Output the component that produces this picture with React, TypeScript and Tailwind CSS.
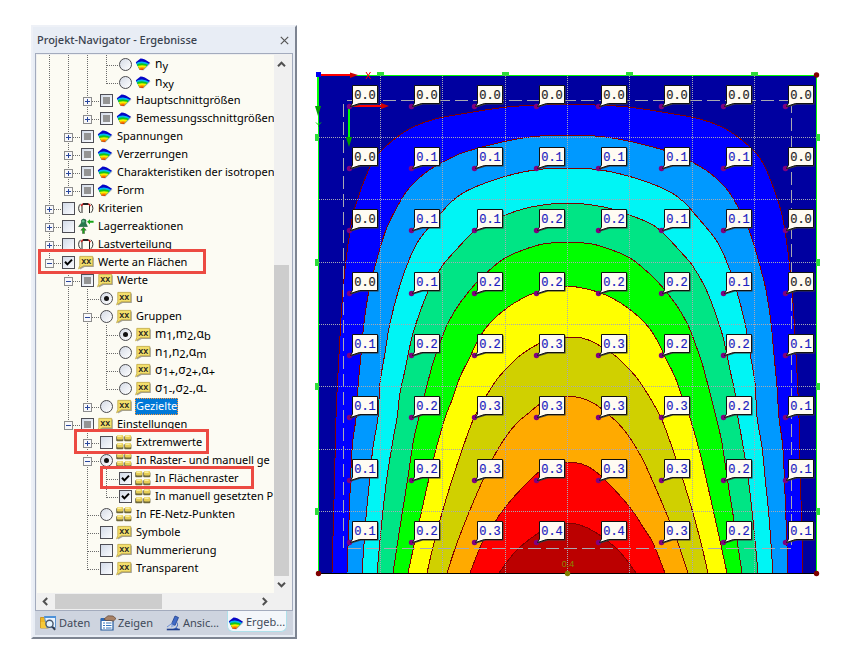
import React from "react";

type Control = "radio" | "radio-on" | "check" | "check-on" | "mixed";
type IconName = "fan" | "frame" | "support" | "tag" | "blocks";

interface Item {
  level: number;
  control: Control;
  icon: IconName;
  text: string;
  label?: React.ReactNode;
  expander?: "+" | "-";
  selected?: boolean;
  mark?: string;
}

const Sub = ({ children }: { children: React.ReactNode }) => (
  <span className="relative top-[2px] text-[11px]">{children}</span>
);

const items: Item[] = [
  { level: 3, control: "radio", icon: "fan", text: "ny", label: <>n<Sub>y</Sub></> },
  { level: 3, control: "radio", icon: "fan", text: "nxy", label: <>n<Sub>xy</Sub></> },
  { level: 2, control: "mixed", icon: "fan", text: "Hauptschnittgrößen", expander: "+" },
  { level: 2, control: "mixed", icon: "fan", text: "Bemessungsschnittgrößen", expander: "+" },
  { level: 1, control: "mixed", icon: "fan", text: "Spannungen", expander: "+" },
  { level: 1, control: "mixed", icon: "fan", text: "Verzerrungen", expander: "+" },
  { level: 1, control: "mixed", icon: "fan", text: "Charakteristiken der isotropen", expander: "+" },
  { level: 1, control: "mixed", icon: "fan", text: "Form", expander: "+" },
  { level: 0, control: "check", icon: "frame", text: "Kriterien", expander: "+" },
  { level: 0, control: "check", icon: "support", text: "Lagerreaktionen", expander: "+" },
  { level: 0, control: "check", icon: "frame", text: "Lastverteilung", expander: "+" },
  { level: 0, control: "check-on", icon: "tag", text: "Werte an Flächen", expander: "-", mark: "left-[1px] -top-1 h-[25px] w-[168px]" },
  { level: 1, control: "mixed", icon: "tag", text: "Werte", expander: "-" },
  { level: 2, control: "radio-on", icon: "tag", text: "u" },
  { level: 2, control: "radio", icon: "tag", text: "Gruppen", expander: "-" },
  { level: 3, control: "radio-on", icon: "tag", text: "m1,m2,αb", label: <>m<Sub>1</Sub>,m<Sub>2</Sub>,α<Sub>b</Sub></> },
  { level: 3, control: "radio", icon: "tag", text: "n1,n2,αm", label: <>n<Sub>1</Sub>,n<Sub>2</Sub>,α<Sub>m</Sub></> },
  { level: 3, control: "radio", icon: "tag", text: "σ1+,σ2+,α+", label: <>σ<Sub>1+</Sub>,σ<Sub>2+</Sub>,α<Sub>+</Sub></> },
  { level: 3, control: "radio", icon: "tag", text: "σ1-,σ2-,α-", label: <>σ<Sub>1-</Sub>,σ<Sub>2-</Sub>,α<Sub>-</Sub></> },
  { level: 2, control: "radio", icon: "tag", text: "Gezielte", expander: "+", selected: true },
  { level: 1, control: "mixed", icon: "tag", text: "Einstellungen", expander: "-" },
  { level: 2, control: "check", icon: "blocks", text: "Extremwerte", expander: "+", mark: "left-[37px] -top-1 h-[25px] w-[135px]" },
  { level: 2, control: "radio-on", icon: "blocks", text: "In Raster- und manuell ge", expander: "-" },
  { level: 3, control: "check-on", icon: "blocks", text: "In Flächenraster", mark: "left-[63px] -top-[3px] h-[23px] w-[154px]" },
  { level: 3, control: "check-on", icon: "blocks", text: "In manuell gesetzten P" },
  { level: 2, control: "radio", icon: "blocks", text: "In FE-Netz-Punkten" },
  { level: 2, control: "check", icon: "tag", text: "Symbole" },
  { level: 2, control: "check", icon: "tag", text: "Nummerierung" },
  { level: 2, control: "check", icon: "tag", text: "Transparent" },
];

/** True when a later row continues the branch line of the given level. */
function continues(index: number, level: number) {
  for (let i = index + 1; i < items.length; i++) {
    if (items[i].level < level) return false;
    if (items[i].level === level) return true;
  }
  return false;
}

function Guides({ index }: { index: number }) {
  const { level, expander } = items[index];
  const own = 9.5 + level * 19;
  const dots = { stroke: "#6b6b6b", strokeDasharray: "1 1" };
  return (
    <svg width={22 + level * 19} height={18} className="shrink-0" shapeRendering="crispEdges" aria-hidden="true">
      {Array.from({ length: level }, (_, l) =>
        continues(index, l) ? <line key={l} x1={9.5 + l * 19} x2={9.5 + l * 19} y1={0} y2={18} {...dots} /> : null
      )}
      <line x1={own} x2={own} y1={0} y2={continues(index, level) ? 18 : 11} {...dots} />
      <line x1={own} x2={own + 12} y1={10.5} y2={10.5} {...dots} />
      {expander && (
        <g>
          <rect x={own - 4} y={6.5} width={8} height={8} fill="#f8f8fa" stroke="#8d8d8d" />
          <path d={`M${own - 2.5} 10.5h5${expander === "+" ? `M${own} 8v5` : ""}`} stroke="#29479c" fill="none" />
        </g>
      )}
    </svg>
  );
}

function ControlBox({ kind, id }: { kind: Control; id: string }) {
  if (kind === "radio" || kind === "radio-on") {
    return (
      <span className="grid size-[13px] shrink-0 place-items-center">
        <input
          id={id}
          type="radio"
          name={id}
          defaultChecked={kind === "radio-on"}
          className="peer size-[13px] appearance-none rounded-full border border-[#4a4a4e] bg-linear-to-br from-[#d5dbe6] to-white [grid-area:1/1]"
        />
        <span className="pointer-events-none hidden size-[5px] rounded-full bg-[#111] [grid-area:1/1] peer-checked:block" />
      </span>
    );
  }
  return (
    <span className="grid size-[13px] shrink-0 place-items-center">
      <input
        id={id}
        type="checkbox"
        defaultChecked={kind === "check-on"}
        className="peer size-[13px] appearance-none border border-[#4e4e55] bg-linear-to-br from-[#d3dbe8] to-[#fbfcff] [grid-area:1/1]"
      />
      {kind === "mixed" && <span className="pointer-events-none size-[7px] bg-[#949494] [grid-area:1/1]" />}
      <svg viewBox="0 0 9 9" className="pointer-events-none hidden size-[9px] [grid-area:1/1] peer-checked:block" aria-hidden="true">
        <path d="M1 3.8 3.4 6.4 8 1.6" fill="none" stroke="#000" strokeWidth="2" />
      </svg>
    </span>
  );
}

function FanIcon() {
  return (
    <svg width="16" height="16" viewBox="0 0 16 16" className="shrink-0" aria-hidden="true">
      <defs>
        <clipPath id="fan">
          <path d="M.8 6.2 5.5 2.4Q9 2.2 15 6.8L7.8 13.8 4.4 13.2Z" />
        </clipPath>
      </defs>
      <path d="M1.4 7 6 3.2Q10 3 15.6 7.6L8.4 14.6 5 14Z" fill="#999" opacity=".5" />
      <g clipPath="url(#fan)">
        <rect width="16" height="16" fill="#0505c8" />
        <path d="M0 8Q7 2.6 16 9V16H0Z" fill="#00b8f0" />
        <path d="M0 9.6Q7 4.6 16 10.4V16H0Z" fill="#10c818" />
        <path d="M0 11.4Q7 7 16 12V16H0Z" fill="#f4f000" />
        <path d="M0 13Q7 9.2 16 13.6V16H0Z" fill="#ff8c00" />
        <path d="M0 14.3Q7 10.8 16 15V16H0Z" fill="#e01010" />
      </g>
    </svg>
  );
}

function ItemIcon({ name }: { name: IconName }) {
  if (name === "fan") return <FanIcon />;
  if (name === "tag")
    return (
      <svg width="16" height="16" viewBox="0 0 16 16" className="shrink-0" aria-hidden="true">
        <path d="M3 3.4H15.8V13H6.600L2 15.600Z" fill="#666" opacity=".6" />
        <path d="M1.800 2.400H14.700V11.800H5.400L.600 14.800 1.800 11.400Z" fill="#f3df6b" stroke="#bfa640" strokeWidth=".8" />
        <text x="8.3" y="9.6" textAnchor="middle" fontSize="9" fontWeight="600" fontFamily="'Open Sans', sans-serif" fill="#222">xx</text>
      </svg>
    );
  if (name === "blocks")
    return (
      <svg width="16" height="16" viewBox="0 0 16 16" className="shrink-0" aria-hidden="true">
        {[[0.6, 1], [8.6, 1], [0.6, 9], [8.6, 9]].map(([x, y]) => (
          <g key={`${x}-${y}`}>
            <rect x={x - 0.4} y={y + 1} width="7.2" height="5.200" rx="1" fill="#6f683c" />
            <rect x={x + 0.4} y={y} width="6" height="4.400" rx=".8" fill="#e6cd55" />
            <rect x={x + 1} y={y + 0.4} width="4" height="1.500" fill="#fbf1a5" />
          </g>
        ))}
      </svg>
    );
  if (name === "frame")
    return (
      <svg width="16" height="16" viewBox="0 0 16 16" className="shrink-0" aria-hidden="true">
        <path d="M4 13V4.500H11.500V13" fill="none" stroke="#222" strokeWidth="1" />
        <path d="M2.600 3.800Q.600 5.500.600 8.300T2.600 12.800M12.900 3.800Q14.900 5.500 14.900 8.300T12.900 12.800" fill="none" stroke="#333" strokeWidth="1" />
        <path d="M5 3.500H10.500" stroke="#222" />
        <path d="M3 6 5 3.600M12.500 6 10.500 3.600" stroke="#d91c1c" strokeWidth="1.300" />
      </svg>
    );
  return (
    <svg width="16" height="16" viewBox="0 0 16 16" className="shrink-0" aria-hidden="true">
      <path d="M3.600 2Q5.600.2 8 2L7.800 5.200 9.400 8.500H.600L3.400 5Z" fill="#267a4c" stroke="#145232" strokeWidth=".6" />
      <circle cx="5.200" cy="3.200" r="1.300" fill="#5cb887" />
      <path d="M9 3.800 12 1.200V2.800H15.600V4.800H12V6.400Z" fill="#19a619" />
      <path d="M5.500 9.200 8.200 12.200H6.500V15.600H4.500V12.200H2.800Z" fill="#19a619" stroke="#3c4a2c" strokeWidth=".5" />
    </svg>
  );
}

function TreeRow({ index }: { index: number }) {
  const item = items[index];
  const id = `item-${index}`;
  const size = item.label ? "text-[12px]" : "text-[11px]";
  return (
    <li className="relative flex h-[18px] items-center whitespace-nowrap pl-[3px]">
      <Guides index={index} />
      <ControlBox kind={item.control} id={id} />
      <span className="ml-[3px] flex">
        <ItemIcon name={item.icon} />
      </span>
      <label
        htmlFor={id}
        className={
          item.selected
            ? "ml-[3px] h-[17px] bg-[#0078d7] px-px text-[11px] leading-4 text-white outline-1 -outline-offset-1 outline-dotted outline-[#ff9a3c]"
            : `ml-1 leading-[18px] ${size}`
        }
      >
        {item.label ?? item.text}
      </label>
      {item.mark && <span className={`pointer-events-none absolute z-10 border-3 border-[#ec4a42] ${item.mark}`} />}
    </li>
  );
}

function Chevron({ d }: { d: string }) {
  return (
    <svg width="9" height="9" viewBox="0 0 9 9" aria-hidden="true">
      <path d={d} fill="none" stroke="#505050" strokeWidth="2" />
    </svg>
  );
}

function TabIcon({ name }: { name: string }) {
  if (name === "Ergeb...") return <FanIcon />;
  if (name === "Daten")
    return (
      <svg width="17" height="16" viewBox="0 0 17 16" className="shrink-0" aria-hidden="true">
        <path d="M.500 2.500h5l1 2h2v8.500h-8z" fill="#f0b823" stroke="#c48a12" strokeWidth=".8" />
        <path d="M4.500 1.500h11v11h-9z" fill="#eaf4ff" stroke="#5b93cf" />
        <path d="M4.500 1h11.500v2H4.500z" fill="#4d91d8" />
        <path d="M.800 7h5.500v6H.800z" fill="#f6c93a" />
        <circle cx="9.500" cy="8.800" r="3.600" fill="#e4f4ff" stroke="#4a586c" strokeWidth="1.400" />
        <path d="m12.200 11.600 3 3.200" stroke="#333e50" strokeWidth="2" />
      </svg>
    );
  if (name === "Zeigen")
    return (
      <svg width="16" height="16" viewBox="0 0 16 16" className="shrink-0" aria-hidden="true">
        <path d="M1 4h12v11H1z" fill="#fff" stroke="#245a9e" strokeWidth="1.2" />
        <path d="M1 3h12v3H1z" fill="#2e69b5" />
        <path d="M3 8h2M3 10.5h2M3 13h2M6 8h5.5M6 10.5h5.5M6 13h5.5" stroke="#3574bd" />
        <path d="M4 4 8 .8 13 1 16 3.6 13.5 6 9 5.4 6 5.5Z" fill="#a88267" stroke="#604638" strokeWidth=".7" />
      </svg>
    );
  return (
    <svg width="15" height="16" viewBox="0 0 15 16" className="shrink-0" aria-hidden="true">
      <path d="m9 1 3.500 1.500-3.500 8-3.500-1.500z" fill="#3f6ac6" stroke="#213f8d" strokeWidth=".8" />
      <path d="m5.500 9 3.500 1.800-4 1.700z" fill="#8daae0" />
      <path d="M11 7q2.500 3-.500 5.500L13.500 15H2q6-.500 8-2.800Q12 9.500 11 7Z" fill="#3561bb" />
      <path d="M.800 14.500h13" stroke="#213f8d" strokeWidth="1.600" />
      <path d="M1 12 6.500 8" stroke="#6b8ed6" />
    </svg>
  );
}

const tabs = [
  { name: "Daten", box: "w-[60px]" },
  { name: "Zeigen", box: "w-[66px]" },
  { name: "Ansic...", box: "w-[61px]" },
  { name: "Ergeb...", box: "w-[60px] rounded-b-md border-x border-b border-[#aee0ea] bg-[#f3f6fa]" },
];

function Navigator() {
  return (
    <section className="flex w-[266px] shrink-0 flex-col border-2 border-t-[#eef1f7] border-r-[#7d8491] border-b-[#7d8491] border-l-[#eef1f7] bg-[#e8edf5] px-[2px] pb-[2px] font-['Noto_Sans','Open_Sans',sans-serif] text-[11px] text-black">
      <header className="flex h-[26px] items-center justify-between pt-px pr-1 pl-[2px]">
        <h1 className="text-[11px] font-medium text-[#39414e]">Projekt-Navigator - Ergebnisse</h1>
        <button aria-label="Schließen" className="grid size-[9px] place-items-center">
          <svg width="9" height="9" viewBox="0 0 9 9" aria-hidden="true">
            <path d="m.8.8 7.4 7.4M8.2.8.8 8.2" stroke="#555" strokeWidth="1.2" />
          </svg>
        </button>
      </header>
      <div className="border border-[#a3abbd] bg-[#f0f0f0]">
        <div className="flex pt-px pl-px">
          <ul className="min-w-0 flex-1 overflow-hidden bg-[#fcfbf3] pb-4">
            {items.map((_, i) => (
              <TreeRow key={i} index={i} />
            ))}
          </ul>
          <div className="mr-[3px] flex w-[15px] flex-col items-center">
            <button aria-label="Nach oben" className="grid h-[18px] place-items-center"><Chevron d="M1 6.2 4.5 2.7 8 6.2" /></button>
            <div className="flex w-full flex-1 flex-col justify-end">
              <div className="h-[311px] bg-[#cdcdcd]" />
            </div>
            <button aria-label="Nach unten" className="grid h-[17px] place-items-center"><Chevron d="M1 2.8 4.5 6.3 8 2.8" /></button>
          </div>
        </div>
        <div className="flex h-[17px] items-center">
          <button aria-label="Nach links" className="grid w-[19px] place-items-center"><Chevron d="M6.2 1 2.7 4.5 6.2 8" /></button>
          <div className="h-[15px] flex-1">
            <div className="h-full w-[107px] bg-[#cdcdcd]" />
          </div>
          <button aria-label="Nach rechts" className="mr-[18px] grid w-[19px] place-items-center"><Chevron d="M2.8 1 6.3 4.5 2.8 8" /></button>
        </div>
      </div>
      <nav className="flex h-6 bg-[#ced4df] pl-[5px]">
        {tabs.map((tab) => (
          <button
            key={tab.name}
            className={`flex h-[21px] items-center gap-[2px] whitespace-nowrap pt-[3px] text-[11px] text-[#3f4959] ${tab.box}`}
          >
            <TabIcon name={tab.name} />
            {tab.name}
          </button>
        ))}
      </nav>
    </section>
  );
}

/* Left halves of the isolines, from the symmetry axis down to the lower edge. */
const AXIS = 567.5;
const isolines: { fill: string; points: number[][] }[] = [
  { fill: "#0000ff", points: [[567, 104], [540, 105], [507, 107], [467, 113], [435, 119], [413, 127], [397, 137], [379, 153], [370, 167], [360, 192], [353, 215], [349, 238], [346, 260], [342, 303], [338, 373], [336, 418], [334, 500], [332, 573]] },
  { fill: "#0099ff", points: [[567, 135], [540, 136], [517, 139], [490, 145], [462, 153], [443, 162], [425, 173], [410, 187], [401, 200], [388, 225], [381, 245], [374, 270], [369, 290], [364, 323], [361, 355], [358, 387], [356, 418], [352, 450], [349, 520], [347, 573]] },
  { fill: "#00f5f5", points: [[567, 168], [543, 169], [523, 172], [500, 178], [480, 185], [463, 193], [450, 203], [442, 212], [425, 232], [417, 243], [409, 260], [400, 285], [390, 323], [385, 353], [380, 383], [378, 417], [373, 447], [370, 477], [366, 517], [362, 573]] },
  { fill: "#00e585", points: [[567, 203], [543, 205], [523, 209], [500, 217], [482, 225], [470, 235], [456, 250], [443, 265], [430, 287], [420, 312], [412, 337], [405, 370], [400, 393], [397, 418], [393, 440], [387, 477], [382, 520], [377, 573]] },
  { fill: "#00ff00", points: [[567, 242], [543, 244], [523, 250], [505, 258], [492, 268], [477, 282], [460, 303], [448, 323], [440, 343], [433, 363], [425, 393], [419, 417], [413, 443], [408, 477], [400, 527], [393, 573]] },
  { fill: "#ffff00", points: [[567, 286], [553, 288], [537, 292], [523, 298], [507, 308], [490, 323], [478, 340], [470, 357], [460, 377], [452, 400], [445, 418], [435, 453], [427, 487], [418, 527], [408, 573]] },
  { fill: "#d0d000", points: [[567, 337], [553, 338], [540, 343], [522, 354], [510, 365], [498, 378], [488, 393], [482, 403], [473, 420], [462, 450], [452, 480], [442, 513], [433, 547], [427, 573]] },
  { fill: "#ffaa00", points: [[567, 396], [554, 398], [540, 404], [530, 412], [517, 423], [505, 438], [493, 458], [482, 482], [470, 510], [457, 543], [447, 573]] },
  { fill: "#ff0000", points: [[567, 462], [553, 464], [540, 471], [523, 487], [503, 510], [492, 527], [482, 543], [470, 573]] },
  { fill: "#bb0000", points: [[567, 523], [555, 525], [540, 532], [520, 547], [510, 558], [499, 573]] },
];

/** Smooth curve (Catmull-Rom) through a half isoline and its mirror image. */
function isoPath(points: number[][]) {
  const left = [...points].reverse();
  const right = points.slice(1).map(([x, y]) => [AXIS * 2 - x, y]);
  const all = [...left, ...right];
  let d = `M${all[0][0]} ${all[0][1]}`;
  for (let i = 0; i < all.length - 1; i++) {
    const a = all[Math.max(i - 1, 0)];
    const b = all[i];
    const c = all[i + 1];
    const e = all[Math.min(i + 2, all.length - 1)];
    d += `C${b[0] + (c[0] - a[0]) / 6} ${b[1] + (c[1] - a[1]) / 6} ${c[0] - (e[0] - b[0]) / 6} ${c[1] - (e[1] - b[1]) / 6} ${c[0]} ${c[1]}`;
  }
  return d;
}

const gridX = [380.5, 442.5, 505.5, 567.5, 629.5, 692.5, 754.5];
const gridY = [137.5, 199.5, 262.5, 324.5, 386.5, 449.5, 511.5];
const anchorX = [349, 411, 474, 536, 598, 661, 723, 785];
const anchorY = [106, 168, 230, 293, 355, 417, 480, 542];
const values = [
  ["0.0", "0.0", "0.0", "0.0", "0.0", "0.0", "0.0", "0.0"],
  ["0.0", "0.1", "0.1", "0.1", "0.1", "0.1", "0.1", "0.0"],
  ["0.0", "0.1", "0.1", "0.2", "0.2", "0.1", "0.1", "0.0"],
  ["0.0", "0.1", "0.2", "0.2", "0.2", "0.2", "0.1", "0.0"],
  ["0.1", "0.2", "0.2", "0.3", "0.3", "0.2", "0.2", "0.1"],
  ["0.1", "0.2", "0.3", "0.3", "0.3", "0.3", "0.2", "0.1"],
  ["0.1", "0.2", "0.3", "0.3", "0.3", "0.3", "0.2", "0.1"],
  ["0.1", "0.2", "0.3", "0.4", "0.4", "0.3", "0.2", "0.1"],
];

function ContourPlot() {
  return (
    <svg viewBox="312 69 510 510" className="block w-full" role="img" aria-label="Verformung u der Fläche">
      <g shapeRendering="crispEdges">
        <rect x="318" y="75" width="499" height="499" fill="#0000a0" />
        {isolines.map((line) => (
          <path key={line.fill} d={isoPath(line.points)} fill={line.fill} stroke="#800000" />
        ))}
        <g stroke="#a8a8b4" strokeDasharray="1 1">
          {gridX.map((x) => <path key={x} d={`M${x} 76V573`} />)}
          {gridY.map((y) => <path key={y} d={`M319 ${y}H816`} />)}
        </g>
        <g stroke="#a9a9b2" strokeDasharray="13 5" fill="none">
          <path d="M347 100.5H791M343.5 104V548M348 548.5H791M791.5 100V548" />
        </g>
        <path d="M318.5 573V75.5H816.5V573" fill="none" stroke="#00ff00" />
        <path d="M318 573.5H817" stroke="#000" />
        <g fill="#2fdc3a">
          {[380, 505, 629, 754].map((x) => <rect key={x} x={x - 3} y={72} width={7} height={4} />)}
          {[137, 262, 386, 511].map((y) => (
            <g key={y}>
              <rect x={315} y={y - 3} width={4} height={7} />
              <rect x={816} y={y - 3} width={4} height={7} />
            </g>
          ))}
        </g>
        <path d="M318 75H353" stroke="#ff0000" strokeWidth="2" />
        <path d="M318 76V108" stroke="#00ff00" strokeWidth="2" />
        <rect x="316" y="72" width="5" height="5" fill="#0000f0" />
        <path d="M349 106H383" stroke="#ff0000" strokeWidth="2" />
        <path d="M349 107V138" stroke="#00ff00" strokeWidth="2" />
      </g>
      <path d="M350 72.500 358 75 350 78ZM381 103 389 106 381 109Z" fill="#d00000" />
      <path d="M315 106H321L318 116ZM346 137H352L349 147Z" fill="#00a000" />
      <path d="M366 72 370.500 79M370.500 72 366 79" stroke="#f00000" fill="none" />
      <path d="M316 122.500 318.500 125 321 122.500M318.500 125V127" stroke="#00d000" fill="none" />
      <g fill="#800000">
        <circle cx="816.500" cy="75" r="2.700" />
        <circle cx="816.500" cy="573.500" r="2.700" />
        <circle cx="318.500" cy="573.500" r="2.700" />
      </g>
      <circle cx="567.500" cy="573.500" r="2.700" fill="#808000" />
      <text x="568" y="567" textAnchor="middle" fontSize="9" fontFamily="'Liberation Sans', sans-serif" fill="#8a8500">0.4</text>
      {values.map((row, r) =>
        row.map((value, c) => {
          const x = anchorX[c];
          const y = anchorY[r];
          return (
            <g key={`${r}-${c}`}>
              <circle cx={x + 0.5} cy={y + 0.5} r="2.700" fill="#800080" />
              <g transform={`translate(${x} ${y})`}>
                <path d="M4 -19.500H29.500V-1.500H12L2 1.500 4.500 -2.500Z" fill="#3a3a3a" />
                <path d="M3.500 -20.500H28.500V-2.500H10.500L1.500 .500 3.500 -3Z" fill="#fffbf2" stroke="#111" />
                <text
                  x="16"
                  y="-7"
                  textAnchor="middle"
                  fontSize="12"
                  fontFamily="'Liberation Mono', monospace"
                  fill={value === "0.0" ? "#222222" : "#1c1cc0"}
                  stroke={value === "0.0" ? "#222222" : "#1c1cc0"}
                  strokeWidth=".2"
                >
                  {value}
                </text>
              </g>
            </g>
          );
        })
      )}
    </svg>
  );
}

export default function App() {
  return (
    <main className="flex min-h-screen items-start gap-[15px] bg-white pt-[25px] pr-8 pl-[31px]">
      <Navigator />
      <div className="mt-11 min-w-0 flex-1">
        <ContourPlot />
      </div>
    </main>
  );
}
